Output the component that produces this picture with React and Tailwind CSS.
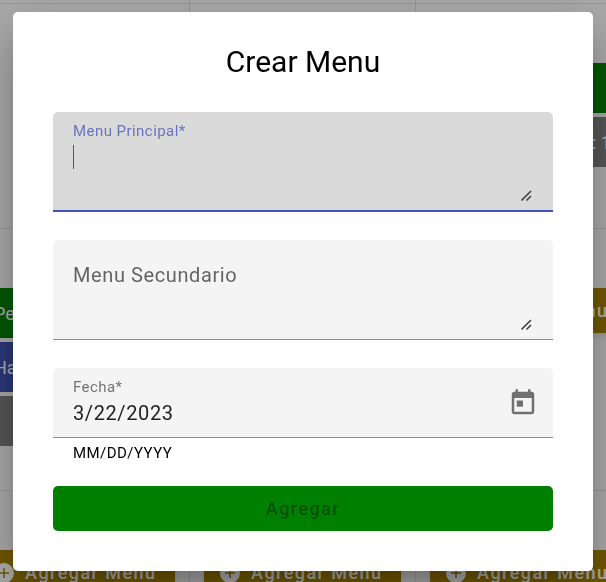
import { useState } from "react";

function PlusCircle() {
  return (
    <svg viewBox="0 0 20 20" className="size-5 shrink-0" aria-hidden="true">
      <circle cx="10" cy="10" r="10" fill="currentColor" />
      <path d="M10 5v10M5 10h10" stroke="#a68200" strokeWidth="1.5" />
    </svg>
  );
}

function Grip() {
  return (
    <svg
      viewBox="0 0 12 12"
      className="pointer-events-none absolute right-5 bottom-2 size-3"
      stroke="#444444"
      strokeWidth="1.6"
      aria-hidden="true"
    >
      <path d="M0.5 10.5L10 1M5.5 10.5L10 6" />
    </svg>
  );
}

function AddButton() {
  return (
    <button
      type="button"
      className="flex h-[45px] w-full items-center gap-[11px] rounded-[5px] bg-[#a68200] pl-4 text-lg font-medium tracking-[0.08em] whitespace-nowrap text-white shadow-md"
    >
      <PlusCircle />
      Agregar Menu
    </button>
  );
}

function Cell({ children }) {
  return (
    <div className="flex flex-col gap-1 border-r border-b border-[#e0e0e0] px-[14px] pt-[59px]">
      {children}
    </div>
  );
}

function Calendar() {
  return (
    <div className="fixed inset-0 flex justify-center overflow-hidden bg-[#fafafa]" aria-hidden="true">
      <div className="grid shrink-0 grid-cols-[repeat(3,226px)] grid-rows-[4px_225px_262px_225px] text-lg text-white">
        <div className="border-r border-b border-[#e0e0e0]" />
        <div className="border-r border-b border-[#e0e0e0]" />
        <div className="border-r border-b border-[#e0e0e0]" />
        <Cell />
        <Cell />
        <Cell>
          <div className="h-[50px] bg-[#008000]" />
          <div className="h-[50px] bg-[#808080] pr-1.5 text-right leading-[52px]">: 12</div>
        </Cell>
        <Cell>
          <div className="h-[50px] bg-[#008000] pl-4 leading-[52px]">Pescado</div>
          <div className="h-[50px] bg-[#3f51b5] pl-4 leading-[52px]">Hamburguesa</div>
          <div className="h-[50px] bg-[#808080]" />
        </Cell>
        <Cell />
        <Cell>
          <AddButton />
        </Cell>
        <Cell>
          <AddButton />
        </Cell>
        <Cell>
          <AddButton />
        </Cell>
        <Cell>
          <AddButton />
        </Cell>
      </div>
    </div>
  );
}

export default function App() {
  const [main, setMain] = useState("");
  const [side, setSide] = useState("");
  const [date, setDate] = useState("3/22/2023");

  return (
    <div className="font-[Roboto,sans-serif]">
      <Calendar />
      <div className="relative flex min-h-screen items-center justify-center bg-black/32 px-[13px]">
        <form
          role="dialog"
          aria-labelledby="title"
          className="w-full max-w-[580px] rounded-[5px] bg-white px-10 pt-[30px] pb-10 shadow-[0_14px_19px_-9px_rgba(0,0,0,0.2),0_30px_48px_4px_rgba(0,0,0,0.14),0_11px_58px_10px_rgba(0,0,0,0.12)]"
        >
          <h2 id="title" className="mb-[30px] text-center text-[30px] leading-10 text-black">
            Crear Menu
          </h2>

          <div className="relative h-[100px] rounded-t-[5px] border-b-2 border-[#3f51b5] bg-[#dadada] px-5 pt-[9px]">
            <label htmlFor="main" className="block text-[15px] leading-5 tracking-[0.03em] text-[#3f51b5]/75">
              Menu Principal*
            </label>
            <textarea
              id="main"
              value={main}
              onChange={(e) => setMain(e.target.value)}
              className="mt-1 block h-[58px] w-full resize-none bg-transparent text-xl leading-6 tracking-[0.03em] text-black/87 caret-transparent outline-none"
            />
            <span className="absolute top-[33px] left-5 h-6 w-px bg-[#3f51b5]" />
            <Grip />
          </div>

          <div className="relative mt-7 h-[100px] rounded-t-[5px] border-b border-[#8e8e8e] bg-[#f4f4f4] px-5 pt-[33px]">
            <label
              htmlFor="side"
              className="pointer-events-none absolute top-[23px] left-5 text-xl leading-6 tracking-[0.03em] text-black/60"
            >
              Menu Secundario
            </label>
            <textarea
              id="side"
              value={side}
              onChange={(e) => setSide(e.target.value)}
              className="block h-[58px] w-full resize-none bg-transparent text-xl leading-6 tracking-[0.03em] text-black/87 outline-none"
            />
            <Grip />
          </div>

          <div className="mt-7 flex h-[70px] items-start justify-between rounded-t-[5px] border-b border-[#8e8e8e] bg-[#f4f4f4] pt-[9px] pr-[15px] pl-5">
            <div className="min-w-0 flex-1">
              <label htmlFor="date" className="block text-[15px] leading-5 tracking-[0.03em] text-black/54">
                Fecha*
              </label>
              <input
                id="date"
                value={date}
                onChange={(e) => setDate(e.target.value)}
                aria-describedby="hint"
                className="mt-1 block h-6 w-full bg-transparent text-xl tracking-[0.03em] text-black/87 outline-none"
              />
            </div>
            <button type="button" aria-label="Abrir calendario" className="mt-[11px] text-black/54">
              <svg viewBox="0 0 24 24" className="size-[30px]" fill="currentColor">
                <path d="M19 3h-1V1h-2v2H8V1H6v2H5c-1.11 0-1.99.9-1.99 2L3 19c0 1.1.89 2 2 2h14c1.1 0 2-.9 2-2V5c0-1.1-.9-2-2-2zm0 16H5V8h14v11zM7 10h5v5H7z" />
              </svg>
            </button>
          </div>
          <p id="hint" className="mt-[5px] mb-[23px] px-5 text-[15px] leading-5 tracking-[0.03em] text-black">
            MM/DD/YYYY
          </p>

          <button
            type="submit"
            disabled
            className="block h-[45px] w-full rounded-[5px] bg-[#008000] pt-0.5 text-lg font-medium tracking-[0.08em] text-black/38"
          >
            Agregar
          </button>
        </form>
      </div>
    </div>
  );
}
